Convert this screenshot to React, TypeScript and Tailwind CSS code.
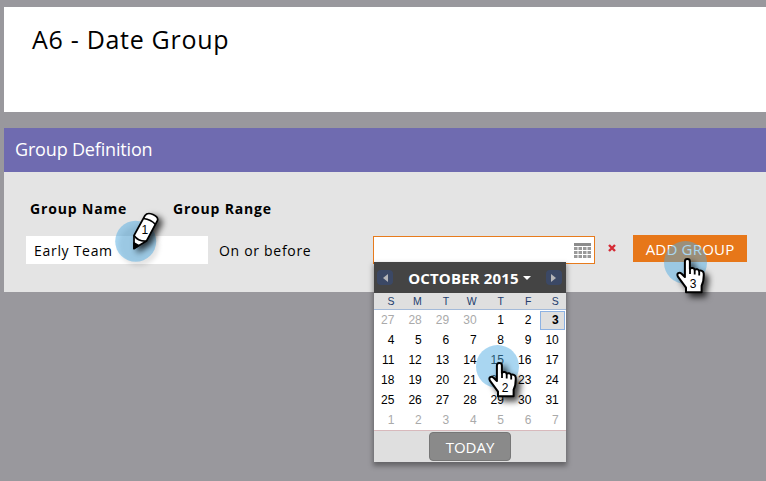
import React from "react";

type Day = { n: number; out?: boolean; selected?: boolean };

const days: Day[] = [
  ...[27, 28, 29, 30].map((n) => ({ n, out: true })),
  ...Array.from({ length: 31 }, (_, i) => ({ n: i + 1, selected: i === 2 })),
  ...[1, 2, 3, 4, 5, 6, 7].map((n) => ({ n, out: true })),
];

function Spot({ className, children }: { className: string; children: React.ReactNode }) {
  return (
    <svg className={`pointer-events-none absolute h-[75px] w-[70px] overflow-visible ${className}`} viewBox="0 0 70 75" fill="none">
      {children}
    </svg>
  );
}

function Hand({ n, className }: { n: number; className: string }) {
  return (
    <Spot className={className}>
      <circle cx="27.5" cy="31.5" r="21.5" fill="#4ba9e2" fillOpacity=".48" />
      <g className="[filter:drop-shadow(4px_4px_3px_rgb(0_0_0/0.75))]">
        <path
          d="M26.900 30.500c0-3.300 5-3.300 5 0v7.500c1-1.500 4.300-1.300 4.700.8 1.100-1.200 4.200-.7 4.500 1.200 1.400-1 4.400 0 4.600 2.300.3 6.500-.3 9.200-2.100 12.500v6.500H28v-4.700l-8.100-11c-1.600-3.500 1.300-5 3.700-2.900l3.300 3.300z"
          fill="#fff" stroke="#000" strokeWidth="2" strokeLinejoin="round"
        />
        <path d="M32 37.500v5.500M36.700 39v4.500M41.200 40.500v4" stroke="#000" strokeWidth="1.800" />
      </g>
      <text x="35" y="56.700" textAnchor="middle" fill="#000" fontSize="12" className="font-['Liberation_Sans',sans-serif]">{n}</text>
    </Spot>
  );
}

function Pencil() {
  return (
    <Spot className="left-[105px] top-[200px]">
      <circle cx="30.7" cy="41.3" r="20.5" fill="#4ba9e2" fillOpacity=".48" className="[filter:drop-shadow(3px_4px_2px_rgb(0_0_0/0.22))]" />
      <g className="[filter:drop-shadow(4px_3px_3px_rgb(0_0_0/0.75))]" stroke="#000" strokeWidth="1.7" strokeLinejoin="round">
        <path d="M29 48.5V35.5L40 15.500c3-4.500 14 0 12.500 5L41.500 41z" fill="#fff" />
        <path d="M38.500 18.500c4 .5 9 2.500 12 6M29 35.500c2.500 3.500 7 6 12.500 5.500" />
        <path d="M29 48.500v-5.500l4.500 2.500z" fill="#000" />
      </g>
      <text x="39.800" y="34" textAnchor="middle" fill="#000" fontSize="12" className="font-['Liberation_Sans',sans-serif]">1</text>
    </Spot>
  );
}

function Arrow({ left }: { left?: boolean }) {
  return (
    <span className="flex h-[15px] w-4 items-center justify-center rounded-sm bg-[#3b4865]">
      <svg className="h-2 w-[5px]" viewBox="0 0 5 8"><path d={left ? "M5 0v8L0 4z" : "M0 0v8l5-4z"} fill="#b5b5b8" /></svg>
    </span>
  );
}

function Calendar() {
  return (
    <div className="absolute left-0 top-[25px] h-[200px] w-[192px] bg-white font-['Liberation_Sans',Arial,sans-serif] shadow-[0_3px_5px_1px_rgba(0,0,0,0.35)]">
      <div className="flex h-[31px] items-center justify-between bg-[#444] pl-[3px] pr-1">
        <Arrow left />
        <span className="flex items-center gap-1 whitespace-nowrap pt-px font-['Open_Sans',sans-serif] text-[15px] font-bold leading-none tracking-[0.15px] text-white">
          OCTOBER 2015
          <svg className="mb-px h-1 w-2" viewBox="0 0 8 4"><path d="M0 0h8L4 4z" fill="#fff" /></svg>
        </span>
        <Arrow />
      </div>
      <div className="grid h-[17px] grid-cols-[repeat(7,27.4px)] border-b border-[#a3bad9] bg-[#dfdfdf] text-right text-[10.5px] leading-4 text-[#233d6d]">
        {["S", "M", "T", "W", "T", "F", "S"].map((d, i) => <span key={i} className="pr-[7px]">{d}</span>)}
      </div>
      <div className="grid h-[120px] grid-cols-[repeat(7,27.4px)] text-right text-[12px] leading-5">
        {days.map((d, i) => (
          <span key={i} className={d.selected ? "mr-[1px] mt-px h-[19px] w-[25px] justify-self-end border border-[#8db2e3] bg-[#dfdfdf] pr-[5px] font-bold leading-[17px]" : d.out ? "pr-[7px] text-[#aaa]" : "pr-[7px] text-black"}>{d.n}</span>
        ))}
      </div>
      <div className="flex h-8 items-center justify-center border-t border-[#d8b9bc] bg-[#dfdfdf]">
        <button className="h-[29px] w-[82px] rounded-sm border border-[#777] bg-[#8a8a8a] font-['Open_Sans',sans-serif] text-[15px] leading-[29px] text-white">TODAY</button>
      </div>
    </div>
  );
}

export default function App() {
  return (
    <main className="relative h-[481px] w-[766px] overflow-hidden bg-[#99989d] pl-1 pt-[7px] font-['Open_Sans',sans-serif] text-black">
      <header className="h-[105px] bg-white pl-[28px] pt-[14px]">
        <h1 className="text-[25px] leading-9 tracking-[0.7px]">A6 - Date Group</h1>
      </header>
      <section className="mt-4 h-[164px] bg-[#e4e4e4]">
        <h2 className="h-11 bg-[#6f6bb0] pl-[11px] text-[18px] leading-[43px] tracking-[-0.17px] text-white">Group Definition</h2>
        <div className="flex h-[64px] pl-[26px] pt-[27px] text-[14px] font-bold leading-5">
          <span className="w-[143px] tracking-[0.85px]">Group Name</span>
          <span className="tracking-[0.8px]">Group Range</span>
        </div>
        <div className="flex h-7 pl-[22px] text-[14px] leading-[29px]">
          <div className="w-[182px] bg-white pl-2 tracking-[0.7px]">Early Team</div>
          <div className="w-[165px] pl-[11px] tracking-[0.7px]">On or before</div>
          <div className="relative flex w-[222px] items-center justify-end border border-[#e77b1d] bg-white pr-[2px]">
            <svg className="h-[17px] w-[19px]" viewBox="0 0 19 17">
              <path d="M1 1h17v3H1z" fill="#8c8c8c" />
              <path d="M1 5h3.500v3H1zM5.500 5h3.500v3H5.500zM10 5h3.500v3h-3.500zM14.500 5h3.500v3h-3.500zM1 9h3.500v3H1zM5.500 9h3.500v3H5.500zM10 9h3.500v3h-3.500zM14.500 9h3.500v3h-3.500zM1 13h3.500v3H1zM5.500 13h3.500v3H5.500zM10 13h3.500v3h-3.500zM14.500 13h3.500v3h-3.500z" fill="#999" />
            </svg>
            <Calendar />
          </div>
          <div className="flex w-[38px] items-center pl-[13px]">
            <svg className="-mt-1 h-2 w-2" viewBox="0 0 8 8"><path d="M1 1l6 6M7 1L1 7" stroke="#d52b35" strokeWidth="2.400" /></svg>
          </div>
          <button className="-mt-px h-[27px] w-[114px] bg-[#e77719] text-[15px] leading-[26px] tracking-[0.2px] text-white">ADD GROUP</button>
        </div>
      </section>
      <Pencil />
      <Hand n={2} className="left-[470px] top-[335px]" />
      <Hand n={3} className="left-[658px] top-[231px]" />
    </main>
  );
}
